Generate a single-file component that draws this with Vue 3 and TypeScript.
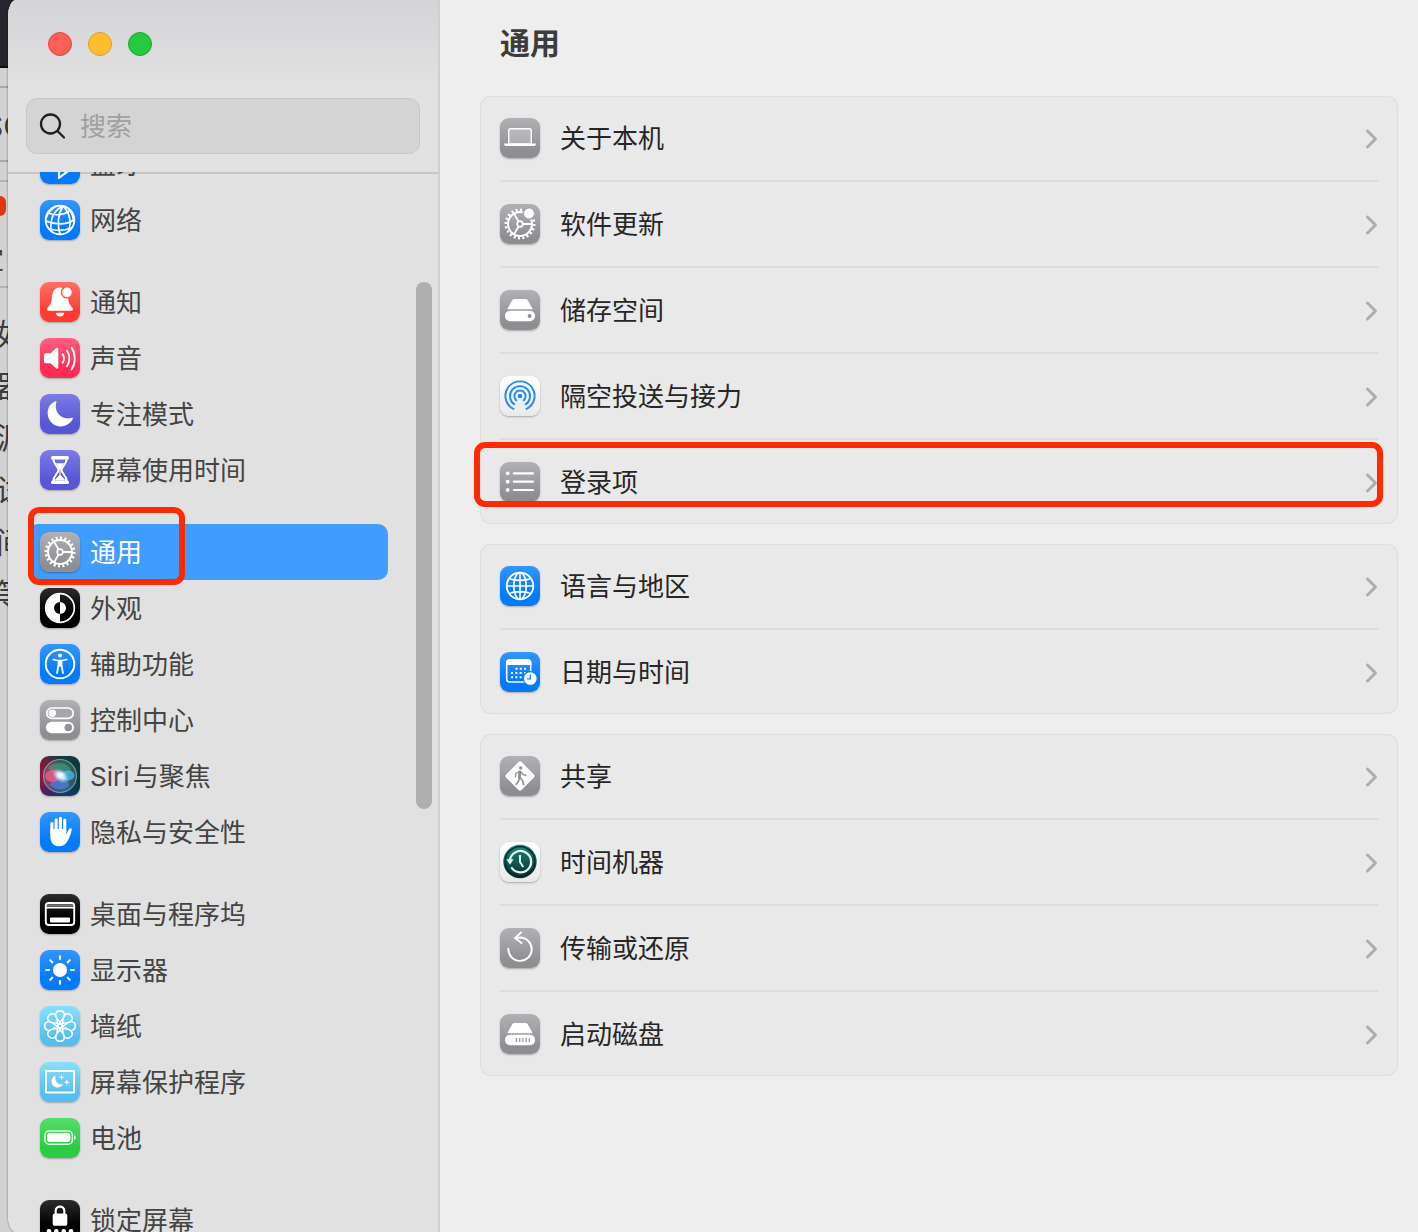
<script setup lang="ts">
import { ref } from 'vue'

interface Item {
  id: string
  label: string
  tile: string
}

const sidebar: Item[][] = [
  [
    { id: 'bluetooth', label: '蓝牙', tile: 'blue' },
    { id: 'network', label: '网络', tile: 'blue' },
  ],
  [
    { id: 'bell', label: '通知', tile: 'red' },
    { id: 'sound', label: '声音', tile: 'pink' },
    { id: 'moon', label: '专注模式', tile: 'purple' },
    { id: 'hourglass', label: '屏幕使用时间', tile: 'purple' },
  ],
  [
    { id: 'gear', label: '通用', tile: 'gray' },
    { id: 'appearance', label: '外观', tile: 'black' },
    { id: 'access', label: '辅助功能', tile: 'blue' },
    { id: 'control', label: '控制中心', tile: 'gray' },
    { id: 'siri', label: 'Siri与聚焦', tile: 'siri' },
    { id: 'hand', label: '隐私与安全性', tile: 'blue' },
  ],
  [
    { id: 'dock', label: '桌面与程序坞', tile: 'black' },
    { id: 'sun', label: '显示器', tile: 'blue' },
    { id: 'flower', label: '墙纸', tile: 'sky' },
    { id: 'saver', label: '屏幕保护程序', tile: 'sky' },
    { id: 'battery', label: '电池', tile: 'green' },
  ],
  [{ id: 'lock', label: '锁定屏幕', tile: 'black' }],
]

const cards: Item[][] = [
  [
    { id: 'laptop', label: '关于本机', tile: 'gray' },
    { id: 'update', label: '软件更新', tile: 'gray' },
    { id: 'drive', label: '储存空间', tile: 'gray' },
    { id: 'airdrop', label: '隔空投送与接力', tile: 'white' },
    { id: 'list', label: '登录项', tile: 'gray' },
  ],
  [
    { id: 'globe', label: '语言与地区', tile: 'blue' },
    { id: 'calendar', label: '日期与时间', tile: 'blue' },
  ],
  [
    { id: 'sharing', label: '共享', tile: 'gray' },
    { id: 'timemachine', label: '时间机器', tile: 'white' },
    { id: 'restore', label: '传输或还原', tile: 'gray' },
    { id: 'startup', label: '启动磁盘', tile: 'gray' },
  ],
]

const behind = ['如', '器', '源', '试', '间', '等']
const selected = ref('gear')
const marked = ref('list')
const query = ref('')
const rays = [0, 45, 90, 135, 180, 225, 270, 315]
</script>

<template>
  <svg class="sprite" aria-hidden="true">
    <defs>
      <radialGradient id="siri-core">
        <stop offset="0" stop-color="#fff" />
        <stop offset="0.35" stop-color="#eefaff" stop-opacity="0.9" />
        <stop offset="1" stop-color="#8fc6e0" stop-opacity="0" />
      </radialGradient>
      <linearGradient id="tm-disc" x1="0" y1="0" x2="0" y2="1">
        <stop offset="0" stop-color="#178a78" />
        <stop offset="1" stop-color="#062c30" />
      </linearGradient>
      <g id="wheel" fill="none" stroke="#fff">
        <circle cx="20" cy="20" r="12" stroke-width="2" />
        <circle cx="20" cy="20" r="14.2" stroke-width="2.6" pathLength="40" stroke-dasharray="0.9 1.1" />
        <circle cx="20" cy="20" r="2.8" stroke-width="1.7" />
        <path d="M23 20h9M18.5 17.4L14 9.6M18.5 22.6L14 30.4" stroke-width="1.9" />
      </g>
    </defs>

    <symbol id="ic-bluetooth" viewBox="0 0 40 40">
      <path d="M11 13l17 14-9 7V6l9 7-17 14" fill="none" stroke="#fff" stroke-width="2.2" stroke-linejoin="round" />
    </symbol>
    <symbol id="ic-network" viewBox="0 0 40 40">
      <g fill="none" stroke="#fff" stroke-width="1.7">
        <circle cx="20" cy="20" r="14.3" stroke-width="1.9" />
        <path d="M23 6C14 10 10 19 11 31M23 6c-5 8-6 19-3 28M23 6c7 7 9 17 5 26M16 6.5C11 9 8 13 6 18M26 7c5 3 7 8 7.5 14" />
        <path d="M8 13c8 3 16 2 23-3M6 21c9 4 20 4 28-1M9 29c8 2 15 2 22-1" />
      </g>
    </symbol>
    <symbol id="ic-bell" viewBox="0 0 40 40">
      <path d="M19.500 5.500c-4.700 0-7 4-7.500 9.500-.4 5-1.300 7.500-4.200 10.500-1.300 1.600-.7 3.300 1.200 3.300h22c1.900 0 2.500-1.700 1.200-3.300-2.900-3-3.800-5.500-4.200-10.500-.5-5.500-3.800-9.500-8.500-9.500z" fill="#fff" />
      <path d="M15.800 30.800h8.400c0 2.400-1.900 3.700-4.200 3.700s-4.200-1.300-4.200-3.700z" fill="#fff" />
      <circle cx="27" cy="10.300" r="6.300" fill="#ff6158" />
      <circle cx="27" cy="10.300" r="4.800" fill="#fff" />
    </symbol>
    <symbol id="ic-sound" viewBox="0 0 40 40">
      <path d="M6 15.200h4.500l5.800-5.200c.8-.7 2-.3 2 .9v18.700c0 1.200-1.200 1.600-2 .9l-5.800-5.200H6c-1.300 0-2-.7-2-2v-6.100c0-1.300.7-2 2-2z" fill="#fff" />
      <path d="M22.700 16.300c1.600 2.600 1.600 5.800 0 8.400M27 12.800c3 4.600 3 10.800 0 15.400M31.500 9.500c4.300 6.600 4.300 15.400 0 22" fill="none" stroke="#fff" stroke-width="1.900" stroke-linecap="round" />
    </symbol>
    <symbol id="ic-moon" viewBox="0 0 40 40">
      <path d="M15.500 7.300C10 9.500 7.300 14.500 7.700 20c.5 7.300 6.500 12.500 13.300 12.400 5.300-.1 10-3.200 11.900-7.800.2-.7-.3-1-1-.8-4.800 1.400-9.400.3-12.500-2.700-3.200-3-4.400-8-3-13 .2-.6-.2-1-.9-.8z" fill="#fff" />
    </symbol>
    <symbol id="ic-hourglass" viewBox="0 0 40 40">
      <rect x="11" y="6" width="18" height="3.600" rx="1.500" fill="#fff" />
      <rect x="11" y="30.400" width="18" height="3.600" rx="1.500" fill="#fff" />
      <path d="M13.200 8c0 7 5.300 8.500 5.300 12s-5.300 5-5.300 12h13.600c0-7-5.300-8.500-5.300-12s5.300-5 5.300-12z" fill="none" stroke="#fff" stroke-width="2" />
      <path d="M15.500 13.300h9c-1 2.200-3.500 3.700-4 6.700v5l5.300 5.500H14.200l5.300-5.500v-5c-.5-3-3-4.500-4-6.700z" fill="#fff" />
    </symbol>
    <symbol id="ic-gear" viewBox="0 0 40 40"><use href="#wheel" /></symbol>
    <symbol id="ic-appearance" viewBox="0 0 40 40">
      <circle cx="20" cy="20" r="14.300" fill="none" stroke="#fff" stroke-width="1.700" />
      <path d="M20 6a14 14 0 0 0 0 28v-8a6 6 0 0 1 0-12z" fill="#fff" />
      <path d="M20 14a6 6 0 0 1 0 12z" fill="#fff" />
    </symbol>
    <symbol id="ic-access" viewBox="0 0 40 40">
      <circle cx="20" cy="20" r="14.300" fill="none" stroke="#fff" stroke-width="2" />
      <circle cx="20" cy="11.500" r="2.100" fill="#fff" />
      <path d="M13.200 15.500l4.300 1h5l4.300-1" fill="none" stroke="#fff" stroke-width="1.600" stroke-linecap="round" stroke-linejoin="round" />
      <path d="M17.700 16h4.600v6.500h-4.600z" fill="#fff" />
      <path d="M18.500 21.500l-1.500 7.500M21.500 21.500l1.500 7.500" stroke="#fff" stroke-width="1.800" stroke-linecap="round" />
    </symbol>
    <symbol id="ic-control" viewBox="0 0 40 40">
      <rect x="6.800" y="8" width="26.400" height="10.400" rx="5.200" fill="#a7a6ab" stroke="#fff" stroke-width="1.700" />
      <circle cx="12.300" cy="13.200" r="3.700" fill="#fff" />
      <rect x="6" y="21.800" width="28" height="11.400" rx="5.700" fill="#fff" />
      <circle cx="28.300" cy="27.500" r="3.800" fill="#939297" />
    </symbol>
    <symbol id="ic-siri" viewBox="0 0 40 40">
      <circle cx="20" cy="20" r="16.500" fill="#fff" fill-opacity=".16" stroke="#7fc7b5" stroke-opacity=".7" stroke-width="1.200" />
      <path d="M8 12c5-6 17-7 22 0 2 4-1 6-5 8-6 1-13-2-17-8z" fill="#40b68c" fill-opacity=".5" />
      <path d="M10 29c2-5 6-8 11-8 6 1 8 5 8 9-6 5-14 4-19-1z" fill="#4f8ff0" fill-opacity=".55" />
      <ellipse cx="12.500" cy="20" rx="7.500" ry="6" fill="#f0648c" fill-opacity=".7" />
      <ellipse cx="28" cy="19.500" rx="6.500" ry="5" fill="#43bff0" fill-opacity=".75" />
      <ellipse cx="20.500" cy="19.500" rx="10" ry="6.500" fill="url(#siri-core)" transform="rotate(35 20 20)" />
      <ellipse cx="20.500" cy="19" rx="5.500" ry="4.500" fill="url(#siri-core)" />
    </symbol>
    <symbol id="ic-hand" viewBox="0 0 40 40">
      <path d="M11.900 21V11.500M16.100 20V7.700M20.400 20V6.300M24.700 20V8" stroke="#fff" stroke-width="3.100" stroke-linecap="round" />
      <path d="M10.350 17h15.900v5.500l2.600-5.300c.8-1.500 3.400-1 3 .9-1.300 5-2.700 8.400-4.700 11.700C25.300 33 22.600 34.300 19 34.300c-5.200 0-8.600-3.600-8.650-9.300z" fill="#fff" />
    </symbol>
    <symbol id="ic-dock" viewBox="0 0 40 40">
      <rect x="5.800" y="9" width="28.400" height="22" rx="3" fill="none" stroke="#fff" stroke-width="1.900" />
      <path d="M6.800 11.500h26.400" stroke="#777" stroke-width="2.600" />
      <path d="M6 13.700h28" stroke="#fff" stroke-width="1.400" />
      <rect x="10" y="23.500" width="20" height="5" rx="1" fill="#fff" />
    </symbol>
    <symbol id="ic-sun" viewBox="0 0 40 40">
      <circle cx="20" cy="20" r="7" fill="#fff" />
      <path v-for="a in rays" :key="a" d="M20 9V6.300" :transform="`rotate(${a} 20 20)`" stroke="#fff" stroke-width="2.200" stroke-linecap="round" />
    </symbol>
    <symbol id="ic-flower" viewBox="0 0 40 40">
      <path v-for="a in rays" :key="a" d="M22 19L17 12.500C14.500 9 15.500 4.700 20 4.700s5.500 4.300 3 7.800L18 19" :transform="`rotate(${a} 20 20)`" fill="none" stroke="#fff" stroke-width="1.400" />
      <circle cx="20" cy="20" r="2.600" fill="#fff" />
      <circle cx="20" cy="20" r="1.300" fill="#6ccbf5" />
    </symbol>
    <symbol id="ic-saver" viewBox="0 0 40 40">
      <rect x="6" y="9" width="28" height="21.500" fill="none" stroke="#fff" stroke-width="1.900" />
      <path d="M15.500 13.500c-5 2.500-5.300 8.500-1 11.200 3.600 2 7.500.3 8.700-2.500-5 .8-9.200-3-7.700-8.700z" fill="#fff" />
      <path d="M21.500 12.300l.7 2.300 2.300.7-2.300.7-.7 2.300-.7-2.300-2.300-.7 2.300-.7zM26.800 16.800l.8 2.600 2.600.8-2.600.8-.8 2.600-.8-2.600-2.600-.8 2.600-.8z" fill="#fff" />
    </symbol>
    <symbol id="ic-battery" viewBox="0 0 40 40">
      <rect x="4.900" y="13" width="27.500" height="13.200" rx="4.300" fill="none" stroke="#fff" stroke-opacity=".85" stroke-width="1.500" />
      <rect x="7" y="15.100" width="23.300" height="9" rx="2.400" fill="#fff" />
      <path d="M34 17.300c2.600.8 2.600 4 0 4.700z" fill="#fff" fill-opacity=".85" />
    </symbol>
    <symbol id="ic-lock" viewBox="0 0 40 40">
      <rect x="12.700" y="13.500" width="14.600" height="12.300" rx="2" fill="#fff" />
      <path d="M15.700 15v-4.300c0-5.400 8.600-5.400 8.600 0V15" fill="none" stroke="#fff" stroke-width="2.100" />
      <circle v-for="x in [9, 16.3, 23.7, 31]" :key="x" :cx="x" cy="31.300" r="2.300" fill="#fff" />
    </symbol>

    <symbol id="ic-laptop" viewBox="0 0 40 40">
      <path d="M8.700 26V12.500c0-1 .7-1.700 1.700-1.700h19.200c1 0 1.700.7 1.700 1.700V26z" fill="#fff" fill-opacity=".22" stroke="#fff" stroke-width="1.400" />
      <path d="M4 25.600h32c0 1.600-.6 2.400-1.800 2.400H5.800C4.600 28 4 27.200 4 25.600z" fill="#fff" />
    </symbol>
    <symbol id="ic-update" viewBox="0 0 40 40">
      <use href="#wheel" />
      <circle cx="29" cy="9.500" r="6.500" fill="#a9a8ad" />
      <circle cx="29" cy="9.500" r="4.900" fill="#fff" />
    </symbol>
    <symbol id="ic-drive" viewBox="0 0 40 40">
      <path d="M11.500 11.500C12.200 9.800 13 9 15 9h10c2 0 2.800.8 3.500 2.500l4.300 7.800H7.200z" fill="#fff" />
      <rect x="5" y="20.800" width="30" height="10.400" rx="5" fill="#fff" />
      <circle cx="29.600" cy="26" r="1.900" fill="#939297" />
    </symbol>
    <symbol id="ic-airdrop" viewBox="0 0 40 40">
      <g fill="none" stroke="#1f8bfb" stroke-width="1.900" stroke-linecap="round">
        <path d="M13.500 33a14.600 14.600 0 1 1 13 0" />
        <path d="M14.300 28.300a10 10 0 1 1 11.400 0" />
        <path d="M16.300 24.300a5.600 5.600 0 1 1 7.400 0" />
      </g>
      <circle cx="20" cy="20" r="2.300" fill="#1f8bfb" />
    </symbol>
    <symbol id="ic-list" viewBox="0 0 40 40">
      <g v-for="y in [11.3, 19.7, 28]" :key="y" fill="#fff">
        <circle cx="7.700" :cy="y" r="1.900" />
        <rect x="12.800" :y="y - 1.1" width="21.200" height="2.200" rx="1" />
      </g>
    </symbol>
    <symbol id="ic-globe" viewBox="0 0 40 40">
      <g fill="none" stroke="#fff" stroke-width="1.600">
        <circle cx="20" cy="20" r="13.300" stroke-width="1.800" />
        <ellipse cx="20" cy="20" rx="6.300" ry="13.300" />
        <path d="M20 6.500v27M6.500 20h27M9 12.500c6 2.500 16 2.500 22 0M9 27.500c6-2.500 16-2.500 22 0" />
      </g>
    </symbol>
    <symbol id="ic-calendar" viewBox="0 0 40 40">
      <rect x="6.700" y="8" width="24" height="22" rx="3" fill="none" stroke="#fff" stroke-width="1.600" />
      <path d="M6 13v-2.500C6 8.500 7.500 7.200 9.500 7.200H28c2 0 3.400 1.300 3.400 3.300V13z" fill="#fff" />
      <path d="M15.500 16.700h11M11 20.900h15.300M11 25.200h11" fill="none" stroke="#fff" stroke-width="2" stroke-dasharray="2 2.300" />
      <circle cx="30.300" cy="26.500" r="7.500" fill="#0f80fd" />
      <circle cx="30.300" cy="26.500" r="6.300" fill="#fff" />
      <path d="M30.300 22.500v4.300h-3.300" fill="none" stroke="#0f80fd" stroke-width="1.300" />
    </symbol>
    <symbol id="ic-sharing" viewBox="0 0 40 40">
      <rect x="9" y="9" width="22" height="22" rx="2.500" fill="#fff" transform="rotate(45 20 20)" />
      <g fill="none" stroke="#939297" stroke-linecap="round" stroke-linejoin="round">
        <circle cx="20.700" cy="12" r="1.700" fill="#939297" stroke="none" />
        <path d="M19.800 16l-.5 5.500" stroke-width="2.800" />
        <path d="M19 15.500l-3.200 2-.3 3.500M21 16l2 2.500 3 .8" stroke-width="1.300" />
        <path d="M19.200 22l-.5 2.700-2.500 3.800M20 21.500l2.500 3 1 4" stroke-width="1.700" />
      </g>
    </symbol>
    <symbol id="ic-timemachine" viewBox="0 0 40 40">
      <circle cx="20" cy="19.500" r="16.700" fill="url(#tm-disc)" />
      <circle cx="20" cy="19.500" r="14.800" fill="none" stroke="#082327" stroke-width="1.200" />
      <path d="M9.800 18.500a10.700 10.700 0 1 1 1.500 6.800" fill="none" stroke="#e8eeee" stroke-width="2.200" />
      <path d="M6.300 17.300h7.400l-3.700 5.400z" fill="#e8eeee" />
      <path d="M20 13v7l3.300 5" fill="none" stroke="#e8eeee" stroke-width="2" />
    </symbol>
    <symbol id="ic-restore" viewBox="0 0 40 40">
      <path d="M8.300 20.700A11.700 11.700 0 1 0 20 9.500l-5 .6M21 4.500l-6 5.600 6.500 5" fill="none" stroke="#fff" stroke-width="1.900" stroke-linecap="round" stroke-linejoin="round" />
    </symbol>
    <symbol id="ic-startup" viewBox="0 0 40 40">
      <path d="M11.500 11.500C12.200 9.800 13 9 15 9h10c2 0 2.800.8 3.500 2.500l4.300 7.800H7.200z" fill="#fff" />
      <rect x="5" y="20.800" width="30" height="10.400" rx="5" fill="#fff" />
      <path d="M16.500 24v4M19.700 24v4M22.900 24v4M26.100 24v4M29.300 24v4" stroke="#939297" stroke-width="1.200" />
    </symbol>
  </svg>

  <div class="desktop">
    <div class="behind" aria-hidden="true">
      <div class="behind-bar"></div>
      <div class="behind-tabs"></div>
      <div class="behind-title">SC</div>
      <div class="behind-tools"></div>
      <div class="behind-head">
        <span class="behind-badge"></span>
        <span class="behind-word">宜</span>
      </div>
      <div class="behind-body">
        <span v-for="c in behind" :key="c">{{ c }}</span>
      </div>
    </div>

    <div class="window">
      <aside class="sidebar">
        <header class="side-top">
          <div class="lights">
            <button class="light close" aria-label="关闭"></button>
            <button class="light minimize" aria-label="最小化"></button>
            <button class="light zoom" aria-label="缩放"></button>
          </div>
          <label class="search">
            <svg class="glass" viewBox="0 0 28 28" aria-hidden="true">
              <circle cx="11.500" cy="12" r="9.500" />
              <path d="M18.500 19l6.500 6.500" />
            </svg>
            <input v-model="query" type="text" placeholder="搜索" aria-label="搜索" />
          </label>
        </header>
        <nav class="side-list">
          <div class="side-track">
            <div v-for="(group, g) in sidebar" :key="g" class="side-group">
              <a
                v-for="item in group"
                :key="item.id"
                href="#"
                class="side-item"
                :class="{ active: item.id === selected }"
                @click.prevent="selected = item.id"
              >
                <svg class="tile" :class="item.tile" aria-hidden="true"><use :href="`#ic-${item.id}`" /></svg>
                <span class="side-label">{{ item.label }}</span>
                <i v-if="item.id === 'gear'" class="mark mark-side"></i>
              </a>
            </div>
          </div>
          <div class="scrollbar"></div>
        </nav>
      </aside>

      <main class="pane">
        <h1>通用</h1>
        <section v-for="(card, c) in cards" :key="c" class="card">
          <button v-for="item in card" :key="item.id" type="button" class="row">
            <svg class="tile" :class="item.tile" aria-hidden="true"><use :href="`#ic-${item.id}`" /></svg>
            <span class="row-label">{{ item.label }}</span>
            <svg class="chevron" viewBox="0 0 12 22" aria-hidden="true"><path d="M1.500 4l8 8-8 8" /></svg>
            <i v-if="item.id === marked" class="mark mark-row"></i>
          </button>
        </section>
      </main>
    </div>
  </div>
</template>

<style>
body {
  margin: 0;
  overflow: hidden;
}
</style>

<style scoped>
.sprite {
  position: absolute;
  width: 0;
  height: 0;
}

.desktop {
  display: flex;
  height: 100vh;
  overflow: hidden;
  background: linear-gradient(#26252e 68px, #d2d2d2 68px);
  font-family: Inter, 'Noto Sans CJK SC', sans-serif;
  font-size: 26px;
  line-height: 40px;
  text-autospace: normal;
}

.behind {
  flex: none;
  width: 8px;
  overflow: hidden;
  color: #3c3c3c;
}

.behind-bar {
  height: 66px;
  border-bottom: 2px solid #0d0d0f;
}

.behind-tabs {
  height: 18px;
  border-bottom: 2px solid #a8a8a8;
}

.behind-title {
  height: 72px;
  margin-left: -16px;
  border-bottom: 2px solid #a8a8a8;
  font-size: 30px;
  line-height: 76px;
}

.behind-tools {
  height: 18px;
  border-bottom: 2px solid #b4b4b4;
}

.behind-head {
  display: flex;
  flex-direction: column;
  height: 104px;
  border-bottom: 2px solid #b4b4b4;
}

.behind-badge {
  width: 6px;
  height: 20px;
  margin-top: 14px;
  border-radius: 0 6px 6px 0;
  background: #d93a12;
}

.behind-word {
  margin: 24px 0 0 -22px;
}

.behind-body {
  display: flex;
  flex-direction: column;
  margin: 20px 0 0 -4px;
  font-size: 30px;
  line-height: 52px;
}

.window {
  display: flex;
  flex: 1;
  min-width: 0;
  border-radius: 8px 0 0 8px / 16px 0 0 16px;
  background: #eee;
  box-shadow: 0 0 2px rgba(0, 0, 0, 0.6);
  overflow: hidden;
}

.sidebar {
  display: flex;
  flex: none;
  flex-direction: column;
  box-sizing: border-box;
  width: 432px;
  border-right: 2px solid #cfcfcf;
  background: linear-gradient(#d4d4d8, #e1e1e1 84px);
}

.side-top {
  box-sizing: border-box;
  height: 174px;
  padding: 32px 18px 0;
  border-bottom: 2px solid #c6c6c6;
}

.lights {
  display: flex;
  gap: 16px;
  margin: 0 0 42px 22px;
}

.light {
  width: 24px;
  height: 24px;
  padding: 0;
  border: 1px solid;
  border-radius: 50%;
}

.close {
  border-color: #e2463f;
  background: #ff5f57;
}

.minimize {
  border-color: #e0a11f;
  background: #febc2e;
}

.zoom {
  border-color: #14ab2b;
  background: #28c840;
}

.search {
  display: flex;
  align-items: center;
  box-sizing: border-box;
  height: 56px;
  padding: 0 12px;
  gap: 13px;
  border: 1px solid #c8c8c8;
  border-radius: 11px;
  background: #d4d4d4;
}

.glass {
  flex: none;
  width: 28px;
  height: 28px;
  fill: none;
  stroke: #1e1e1e;
  stroke-width: 2.3;
  stroke-linecap: round;
}

.search input {
  flex: 1;
  min-width: 0;
  padding: 2px 0 0;
  border: 0;
  outline: 0;
  background: none;
  color: #262626;
  font: inherit;
}

.search input::placeholder {
  color: #a0a0a0;
  opacity: 1;
}

.side-list {
  position: relative;
  flex: 1;
  min-height: 0;
  margin-top: -2px;
  overflow: hidden;
}

.side-track {
  margin: -36px 50px 0 20px;
}

.side-group {
  margin-bottom: 26px;
}

.side-item {
  position: relative;
  display: flex;
  align-items: center;
  height: 56px;
  padding: 0 12px;
  gap: 10px;
  border-radius: 10px;
  color: #444;
  text-decoration: none;
}

.side-item.active {
  background: #409cff;
  color: #fff;
}

.side-label,
.row-label {
  padding-top: 2px;
}

.scrollbar {
  position: absolute;
  top: 110px;
  right: 6px;
  width: 16px;
  height: 527px;
  border-radius: 8px;
  background: #afafaf;
}

.tile {
  flex: none;
  width: 40px;
  height: 40px;
  border-radius: 9px;
  box-shadow: 0 1px 2px rgba(0, 0, 0, 0.28);
}

.blue {
  background: linear-gradient(#3395ff, #007aff 75%);
}

.red {
  background: linear-gradient(#ff6f66, #ff3b30 75%);
}

.pink {
  background: linear-gradient(#ff5f80, #ff2d55 75%);
}

.purple {
  background: linear-gradient(#7d7be3, #5856d6 75%);
}

.gray {
  background: linear-gradient(#b1b0b5, #8e8d92 85%);
}

.black {
  background: linear-gradient(#2c2c2c, #000 60%);
}

.sky {
  background: linear-gradient(#8be0fb, #54bef0 80%);
}

.green {
  background: linear-gradient(#55de6c, #28cd41 75%);
}

.white {
  background: linear-gradient(#fff, #e9e9e9);
}

.siri {
  background: conic-gradient(#0c3d3c, #0b3540 30%, #0f3f70 45%, #3a2468 58%, #8c1848 72%, #6a1f3c 88%, #0c3d3c);
}

.pane {
  flex: 1;
  min-width: 0;
  padding: 24px 20px 0 40px;
}

h1 {
  margin: 0 20px 34px;
  color: #3c3c3c;
  font-size: 30px;
  font-weight: 700;
  line-height: 38px;
}

.card {
  margin-bottom: 20px;
  padding: 0 20px;
  border-radius: 11px;
  background: #e9e9e9;
  box-shadow: inset 0 0 0 1px #dedede;
}

.row {
  position: relative;
  display: flex;
  align-items: center;
  box-sizing: content-box;
  width: 100%;
  height: 84px;
  padding: 0;
  gap: 20px;
  border: 0;
  background: none;
  color: #262626;
  font: inherit;
  text-align: left;
}

.row + .row {
  border-top: 2px solid #dcdcdc;
}

.row-label {
  flex: 1;
}

.chevron {
  flex: none;
  width: 12px;
  height: 22px;
  fill: none;
  stroke: #adadad;
  stroke-width: 3;
  stroke-linecap: round;
  stroke-linejoin: round;
}

.mark {
  position: absolute;
  box-sizing: border-box;
  border: 6px solid #ff2a00;
  border-radius: 11px;
  pointer-events: none;
}

.mark-side {
  top: -17px;
  left: 0;
  width: 157px;
  height: 78px;
}

.mark-row {
  top: 2px;
  right: -5px;
  left: -26px;
  height: 65px;
}
</style>
